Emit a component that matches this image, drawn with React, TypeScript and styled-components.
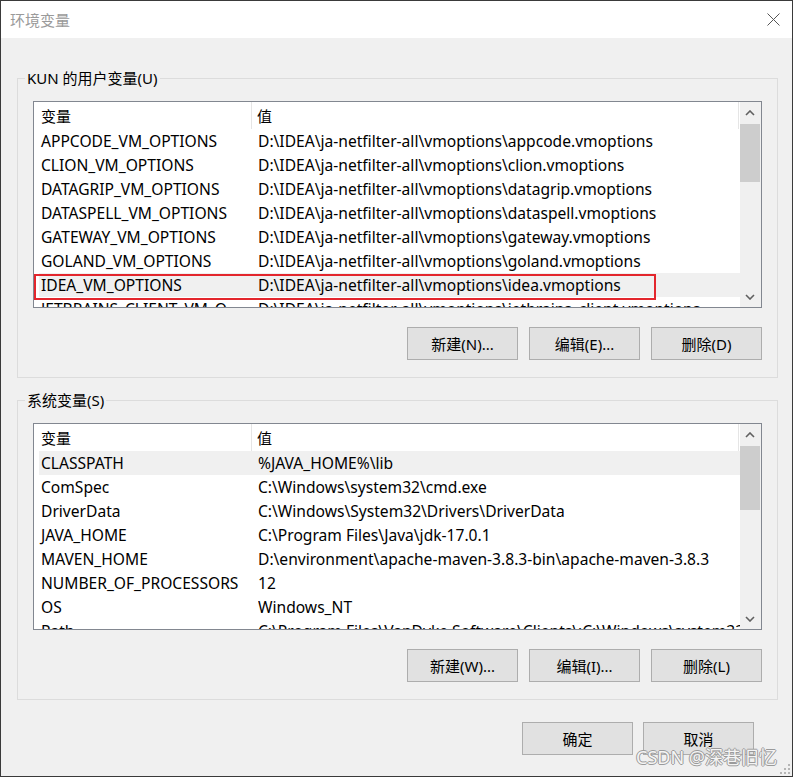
import React from 'react'
import styled, { createGlobalStyle } from 'styled-components'

const GlobalStyle = createGlobalStyle`
  html, body {
    margin: 0;
    padding: 0;
    background: #fff;
  }
  body {
    font-family: 'Noto Sans', 'Noto Sans CJK SC', sans-serif;
    font-size: 15px;
    color: #000;
  }
  * {
    box-sizing: border-box;
  }
`

const Window = styled.div`
  position: relative;
  width: 793px;
  height: 777px;
  border: 1px solid #3a3a3a;
  background: #f0f0f0;
  display: flex;
  flex-direction: column;
  overflow: hidden;
`

const TitleBar = styled.div`
  flex: none;
  height: 37px;
  background: #fff;
  display: flex;
  align-items: center;
  justify-content: space-between;
  padding: 0 12px 0 9px;
`

const Title = styled.span`
  color: #9a9a9a;
  font-family: 'Noto Sans CJK SC', sans-serif;
  font-size: 15px;
  line-height: 20px;
`

const CloseButton = styled.div`
  width: 13px;
  height: 13px;
  display: flex;
`

const Body = styled.div`
  flex: 1;
  display: flex;
  flex-direction: column;
  padding: 30px 14px 0 16px;
`

const GroupBox = styled.fieldset`
  margin: 0;
  min-width: 0;
  border: 1px solid #dcdcdc;
  padding: 13px 15px 17px;
  & + & {
    margin-top: 12px;
  }
`

const Legend = styled.legend`
  padding: 0 2px;
  margin-left: -8px;
  font-size: 15px;
  line-height: 20px;
`

const ListFrame = styled.div`
  height: 207px;
  border: 1px solid #828790;
  background: #fff;
  display: flex;
`

const ListContent = styled.div`
  flex: 1;
  min-width: 0;
  overflow: hidden;
`

const HeaderRow = styled.div`
  display: flex;
  height: 27px;
`

const HeaderCell = styled.div<{ $w: number; $pad: number }>`
  flex: none;
  width: ${({ $w }) => $w}px;
  padding: 3px 0 0 ${({ $pad }) => $pad}px;
  border-right: 1px solid #e5e5e5;
  line-height: 22px;
`

const Row = styled.div<{ $selected?: boolean }>`
  position: relative;
  display: flex;
  height: 24px;
  margin-left: 5px;
  font-size: 15.6px;
  line-height: 24px;
  background: ${({ $selected }) => ($selected ? '#f0f0f0' : 'transparent')};
`

const NameCell = styled.div`
  flex: none;
  width: 219px;
  padding: 0 14px 0 2px;
  white-space: nowrap;
  overflow: hidden;
  text-overflow: ellipsis;
`

const ValueCell = styled.div`
  flex: 1;
  min-width: 0;
  white-space: nowrap;
  overflow: hidden;
`

// red marker somebody drew round the row in the screenshot
const Marker = styled.span`
  position: absolute;
  left: -5px;
  top: 1px;
  width: 622px;
  height: 26px;
  border: 2px solid #e3262d;
  pointer-events: none;
`

const ScrollBar = styled.div`
  flex: none;
  width: 21px;
  background: #f0f0f0;
  display: flex;
  flex-direction: column;
`

const ScrollArrow = styled.div<{ $h: number }>`
  flex: none;
  height: ${({ $h }) => $h}px;
  display: flex;
  align-items: center;
  justify-content: center;
  padding-right: 1px;
`

const Thumb = styled.div<{ $h: number }>`
  flex: none;
  height: ${({ $h }) => $h}px;
  margin-right: 1px;
  background: #cdcdcd;
`

const Track = styled.div`
  flex: 1;
`

const ButtonRow = styled.div<{ $gap: number; $top: number; $right?: number }>`
  display: flex;
  justify-content: flex-end;
  gap: ${({ $gap }) => $gap}px;
  margin-top: ${({ $top }) => $top}px;
  padding-right: ${({ $right }) => $right || 0}px;
`

const Button = styled.button`
  width: 111px;
  height: 33px;
  padding: 0;
  border: 1px solid #adadad;
  border-radius: 0;
  background: #e1e1e1;
  color: #000;
  font-family: 'Noto Sans', 'Noto Sans CJK SC', sans-serif;
  font-size: 15px;
  line-height: 20px;
`

const Watermark = styled.div`
  position: absolute;
  right: 15px;
  bottom: 8px;
  font-family: 'Noto Sans', 'Noto Sans CJK SC', sans-serif;
  font-size: 18px;
  line-height: 22px;
  color: #f4f4f4;
  text-shadow: 1px 0 #9a9a9a, -1px 0 #9a9a9a, 0 1px #9a9a9a, 0 -1px #9a9a9a;
  pointer-events: none;
`

const Gripper = styled.svg`
  position: absolute;
  right: 1px;
  bottom: 1px;
`

type Variable = [string, string]

const userVars: Variable[] = [
  ['APPCODE_VM_OPTIONS', 'D:\\IDEA\\ja-netfilter-all\\vmoptions\\appcode.vmoptions'],
  ['CLION_VM_OPTIONS', 'D:\\IDEA\\ja-netfilter-all\\vmoptions\\clion.vmoptions'],
  ['DATAGRIP_VM_OPTIONS', 'D:\\IDEA\\ja-netfilter-all\\vmoptions\\datagrip.vmoptions'],
  ['DATASPELL_VM_OPTIONS', 'D:\\IDEA\\ja-netfilter-all\\vmoptions\\dataspell.vmoptions'],
  ['GATEWAY_VM_OPTIONS', 'D:\\IDEA\\ja-netfilter-all\\vmoptions\\gateway.vmoptions'],
  ['GOLAND_VM_OPTIONS', 'D:\\IDEA\\ja-netfilter-all\\vmoptions\\goland.vmoptions'],
  ['IDEA_VM_OPTIONS', 'D:\\IDEA\\ja-netfilter-all\\vmoptions\\idea.vmoptions'],
  ['JETBRAINS_CLIENT_VM_OPTIONS', 'D:\\IDEA\\ja-netfilter-all\\vmoptions\\jetbrains_client.vmoptions'],
]

const systemVars: Variable[] = [
  ['CLASSPATH', '%JAVA_HOME%\\lib'],
  ['ComSpec', 'C:\\Windows\\system32\\cmd.exe'],
  ['DriverData', 'C:\\Windows\\System32\\Drivers\\DriverData'],
  ['JAVA_HOME', 'C:\\Program Files\\Java\\jdk-17.0.1'],
  ['MAVEN_HOME', 'D:\\environment\\apache-maven-3.8.3-bin\\apache-maven-3.8.3'],
  ['NUMBER_OF_PROCESSORS', '12'],
  ['OS', 'Windows_NT'],
  ['Path', 'C:\\Program Files\\VanDyke Software\\Clients\\;C:\\Windows\\system32;C:\\Windows'],
]

const Chevron = ({ down }: { down?: boolean }) => (
  <svg width="10" height="6" viewBox="0 0 10 6">
    <polyline
      points={down ? '1,1 5,5 9,1' : '1,5 5,1 9,5'}
      fill="none"
      stroke="#606060"
      strokeWidth="1.6"
    />
  </svg>
)

interface ListViewProps {
  items: Variable[]
  selected: number
  marked?: number
  thumb: number
}

const ListView = ({ items, selected, marked, thumb }: ListViewProps) => (
  <ListFrame>
    <ListContent>
      <HeaderRow>
        <HeaderCell $w={218} $pad={7}>变量</HeaderCell>
        <HeaderCell $w={487} $pad={5}>值</HeaderCell>
      </HeaderRow>
      {items.map(([name, value], i) => (
        <Row key={name} $selected={i === selected}>
          <NameCell>{name}</NameCell>
          <ValueCell>{value}</ValueCell>
          {i === marked && <Marker />}
        </Row>
      ))}
    </ListContent>
    <ScrollBar>
      <ScrollArrow $h={22}>
        <Chevron />
      </ScrollArrow>
      <Thumb $h={thumb} />
      <Track />
      <ScrollArrow $h={21}>
        <Chevron down />
      </ScrollArrow>
    </ScrollBar>
  </ListFrame>
)

const App = () => {
  return (
    <>
      <GlobalStyle />
      <Window>
        <TitleBar>
          <Title>环境变量</Title>
          <CloseButton>
            <svg width="13" height="13" viewBox="0 0 13 13">
              <path d="M0.5 0.5 L12.5 12.5 M12.5 0.5 L0.5 12.5" stroke="#555" strokeWidth="1" />
            </svg>
          </CloseButton>
        </TitleBar>
        <Body>
          <GroupBox>
            <Legend>KUN 的用户变量(U)</Legend>
            <ListView items={userVars} selected={6} marked={6} thumb={58} />
            <ButtonRow $gap={11} $top={19}>
              <Button>新建(N)...</Button>
              <Button>编辑(E)...</Button>
              <Button>删除(D)</Button>
            </ButtonRow>
          </GroupBox>
          <GroupBox>
            <Legend>系统变量(S)</Legend>
            <ListView items={systemVars} selected={0} thumb={64} />
            <ButtonRow $gap={11} $top={19}>
              <Button>新建(W)...</Button>
              <Button>编辑(I)...</Button>
              <Button>删除(L)</Button>
            </ButtonRow>
          </GroupBox>
          <ButtonRow $gap={10} $top={22} $right={24}>
            <Button>确定</Button>
            <Button>取消</Button>
          </ButtonRow>
        </Body>
        <Watermark>CSDN @深巷旧忆</Watermark>
        <Gripper width="11" height="11" viewBox="0 0 11 11">
          <g fill="#b5b5b5">
            <rect x="8" y="0" width="2" height="2" />
            <rect x="4" y="4" width="2" height="2" />
            <rect x="8" y="4" width="2" height="2" />
            <rect x="0" y="8" width="2" height="2" />
            <rect x="4" y="8" width="2" height="2" />
            <rect x="8" y="8" width="2" height="2" />
          </g>
        </Gripper>
      </Window>
    </>
  )
}

export default App
